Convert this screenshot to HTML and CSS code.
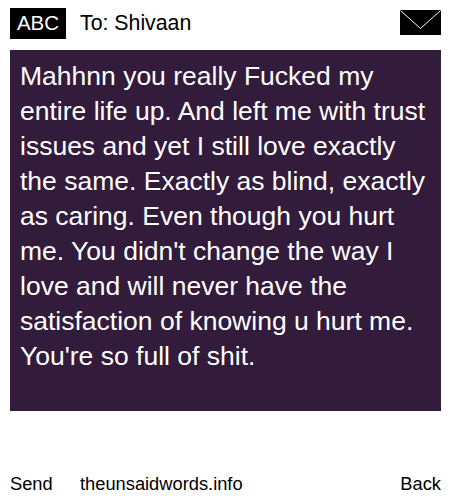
FILE: index.html
```html
<!DOCTYPE html>
<html lang="en">
<head>
    <meta charset="UTF-8">
    <title>The Unsaid Words</title>
    <link rel="stylesheet" href="styles.css">
</head>
<body>
    <div class="page">
        <div class="top-bar">
            <div class="abc">ABC</div>
            <div class="to">To: Shivaan</div>
            <svg class="envelope" viewBox="0 0 41 25" width="41" height="25">
                <rect width="41" height="25" fill="#000"/>
                <path d="M0.5 0.5 L20.5 18.5 L40.5 0.5" fill="none" stroke="#fff" stroke-width="1"/>
            </svg>
        </div>
        <div class="message">Mahhnn you really Fucked my entire life up. And left me with trust issues and yet I still love exactly the same. Exactly as blind, exactly as caring. Even though you hurt me. You didn't change the way I love and will never have the satisfaction of knowing u hurt me. You're so full of shit.</div>
        <div class="bottom-bar">
            <span class="send">Send</span>
            <span class="site">theunsaidwords.info</span>
            <span class="back">Back</span>
        </div>
    </div>
</body>
</html>
```

FILE: styles.css
```css
html, body {
    margin: 0;
    padding: 0;
    background-color: #ffffff;
}

body {
    font-family: "Liberation Sans", Arial, sans-serif;
    color: #000;
}

.page {
    width: 450px;
    height: 500px;
    padding: 8px 9px 0 10px;
    box-sizing: border-box;
    display: flex;
    flex-direction: column;
}

.top-bar {
    display: flex;
    align-items: center;
    height: 31px;
}

.abc {
    background-color: #000;
    color: #fff;
    width: 56px;
    height: 31px;
    line-height: 29px;
    text-align: center;
    font-size: 20.5px;
}

.to {
    margin-left: 14px;
    font-size: 21.3px;
    flex: 1;
}

.envelope {
    align-self: flex-start;
    margin-top: 2px;
}

.message {
    margin-top: 11px;
    height: 361px;
    box-sizing: border-box;
    padding: 9px 10px;
    background-color: #331b3b;
    color: #fff;
    font-size: 26.5px;
    line-height: 35px;
}

.bottom-bar {
    margin-top: 62px;
    display: flex;
    font-size: 18.3px;
    line-height: 22px;
}

.send {
    width: 70px;
}

.site {
    flex: 1;
}
```
